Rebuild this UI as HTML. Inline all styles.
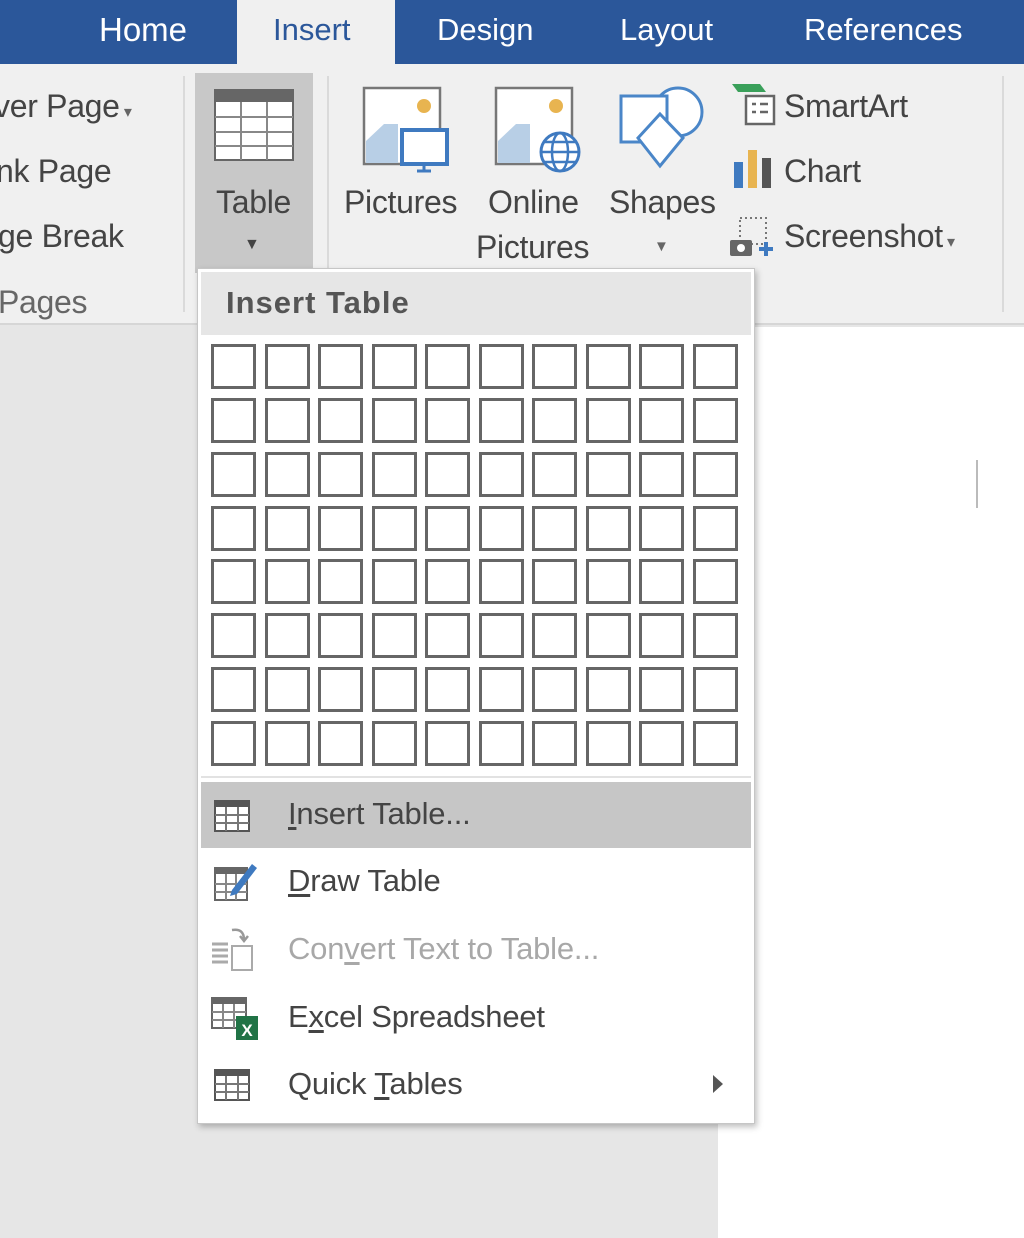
<!DOCTYPE html>
<html><head><meta charset="utf-8"><style>
*{margin:0;padding:0;box-sizing:border-box}
body{width:1024px;height:1238px;overflow:hidden;position:relative;background:#e6e6e6;font-family:"Liberation Sans","DejaVu Sans",sans-serif;color:#444}
.a{position:absolute;white-space:nowrap}
.tab{color:#fff;font-size:31px;top:12px}
.rt{font-size:32px;color:#444;letter-spacing:-0.3px}
.grid{position:absolute;left:211px;top:344px;display:grid;grid-template-columns:repeat(10,45px);grid-auto-rows:45px;column-gap:8.55px;row-gap:8.85px}
.grid div{border:3px solid #666;background:#fff}
.mi{position:absolute;left:288px;font-size:31px;color:#444;letter-spacing:-0.2px}
u{text-decoration:underline;text-underline-offset:3px}
</style></head><body>
<div class="a" style="left:0;top:0;width:1024px;height:64px;background:#2b579a"></div>
<div class="a" style="left:237px;top:0;width:158px;height:66px;background:#f0f0f0"></div>
<div class="a tab" style="left:99px;font-size:33px;top:11px">Home</div>
<div class="a tab" style="left:273px;color:#2b579a">Insert</div>
<div class="a tab" style="left:437px">Design</div>
<div class="a tab" style="left:620px">Layout</div>
<div class="a tab" style="left:804px">References</div>
<div class="a" style="left:0;top:64px;width:1024px;height:261px;background:#f0f0f0;border-bottom:2px solid #d6d6d6"></div>
<div class="a" style="left:718px;top:327px;width:306px;height:911px;background:#fff"></div>
<div class="a" style="left:976px;top:460px;width:2px;height:48px;background:#bbb"></div>
<div class="a" style="left:183px;top:76px;width:2px;height:236px;background:#dadada"></div>
<div class="a" style="left:327px;top:76px;width:2px;height:236px;background:#dadada"></div>
<div class="a" style="left:1002px;top:76px;width:2px;height:236px;background:#dadada"></div>
<div class="a rt" style="left:-6px;top:88px">ver Page<span style="font-size:16px;color:#666"> ▾</span></div>
<div class="a rt" style="left:-4px;top:153px">nk Page</div>
<div class="a rt" style="left:-2px;top:218px">ge Break</div>
<div class="a rt" style="left:-2px;top:284px;color:#666">Pages</div>
<div class="a" style="left:195px;top:73px;width:118px;height:200px;background:#c8c8c8"></div>
<svg class="a" style="left:214px;top:89px" width="80" height="72" viewBox="0 0 80 72">
<rect x="1" y="1" width="78" height="70" fill="#fff" stroke="#666" stroke-width="2"/>
<rect x="1" y="1" width="78" height="12" fill="#666"/>
<path d="M27 13V71M53 13V71M1 28H79M1 43H79M1 57H79" stroke="#888" stroke-width="2"/>
</svg>
<div class="a rt" style="left:216px;top:184px">Table</div>
<div class="a" style="left:244px;top:236px;font-size:16px;color:#444">▼</div>
<svg class="a" style="left:362px;top:86px" width="90" height="88" viewBox="0 0 90 88">
<rect x="2" y="2" width="76" height="76" fill="#fff" stroke="#777" stroke-width="2.5"/>
<circle cx="62" cy="20" r="7" fill="#e8b450"/>
<path d="M4 77V55L22 38H36V77Z" fill="#b8cfe6"/>
<rect x="40" y="44" width="45" height="34" fill="#fff" stroke="#3f7ac0" stroke-width="4"/>
<path d="M62 78V84M55 85H69" stroke="#3f7ac0" stroke-width="3"/>
</svg>
<div class="a rt" style="left:344px;top:184px">Pictures</div>
<svg class="a" style="left:494px;top:86px" width="90" height="88" viewBox="0 0 90 88">
<rect x="2" y="2" width="76" height="76" fill="#fff" stroke="#777" stroke-width="2.5"/>
<circle cx="62" cy="20" r="7" fill="#e8b450"/>
<path d="M4 77V55L22 38H36V77Z" fill="#b8cfe6"/>
<circle cx="66" cy="66" r="19" fill="#fff" stroke="#3f7ac0" stroke-width="3"/>
<ellipse cx="66" cy="66" rx="8" ry="19" fill="none" stroke="#3f7ac0" stroke-width="2.5"/>
<path d="M47 66H85M50 56H82M50 76H82" stroke="#3f7ac0" stroke-width="2.5"/>
</svg>
<div class="a rt" style="left:488px;top:184px">Online</div>
<div class="a rt" style="left:476px;top:229px">Pictures</div>
<svg class="a" style="left:616px;top:82px" width="92" height="90" viewBox="0 0 92 90">
<circle cx="62" cy="30" r="24" fill="#fff" stroke="#4a86c8" stroke-width="3"/>
<rect x="5" y="14" width="46" height="46" fill="#fff" stroke="#4a86c8" stroke-width="3"/>
<path d="M44 32L67 56L44 84L22 56Z" fill="#fff" stroke="#4a86c8" stroke-width="3"/>
</svg>
<div class="a rt" style="left:609px;top:184px">Shapes</div>
<div class="a" style="left:654px;top:238px;font-size:15px;color:#666">▼</div>
<svg class="a" style="left:730px;top:82px" width="50" height="44" viewBox="0 0 50 44">
<path d="M2 2H30L36 10H8Z" fill="#3aa05a"/>
<rect x="16" y="14" width="28" height="28" fill="#fff" stroke="#666" stroke-width="2.5"/>
<path d="M22 22H26M30 22H38M22 30H26M30 30H38" stroke="#666" stroke-width="2.5"/>
</svg>
<div class="a rt" style="left:784px;top:88px">SmartArt</div>
<svg class="a" style="left:732px;top:146px" width="42" height="44" viewBox="0 0 42 44">
<rect x="2" y="16" width="9" height="26" fill="#3f7ac0"/>
<rect x="16" y="4" width="9" height="38" fill="#e8b450"/>
<rect x="30" y="12" width="9" height="30" fill="#555"/>
</svg>
<div class="a rt" style="left:784px;top:153px">Chart</div>
<svg class="a" style="left:728px;top:214px" width="50" height="44" viewBox="0 0 50 44">
<rect x="12" y="4" width="26" height="26" fill="none" stroke="#777" stroke-width="2" stroke-dasharray="2 3"/>
<rect x="2" y="26" width="22" height="16" rx="2" fill="#666"/>
<circle cx="13" cy="34" r="4" fill="#fff"/>
<path d="M38 28V42M31 35H45" stroke="#3f7ac0" stroke-width="4"/>
</svg>
<div class="a rt" style="left:784px;top:218px">Screenshot<span style="font-size:16px;color:#666"> ▾</span></div>
<div class="a" style="left:197px;top:268px;width:558px;height:856px;background:#fff;border:1px solid #c6c6c6;box-shadow:2px 3px 6px rgba(0,0,0,0.25)"></div>
<div class="a" style="left:201px;top:272px;width:550px;height:63px;background:#e6e6e6"></div>
<div class="a" style="left:226px;top:285px;font-size:31px;font-weight:bold;color:#555;letter-spacing:1px">Insert Table</div>
<div class="grid">
<div></div><div></div><div></div><div></div><div></div><div></div><div></div><div></div><div></div><div></div>
<div></div><div></div><div></div><div></div><div></div><div></div><div></div><div></div><div></div><div></div>
<div></div><div></div><div></div><div></div><div></div><div></div><div></div><div></div><div></div><div></div>
<div></div><div></div><div></div><div></div><div></div><div></div><div></div><div></div><div></div><div></div>
<div></div><div></div><div></div><div></div><div></div><div></div><div></div><div></div><div></div><div></div>
<div></div><div></div><div></div><div></div><div></div><div></div><div></div><div></div><div></div><div></div>
<div></div><div></div><div></div><div></div><div></div><div></div><div></div><div></div><div></div><div></div>
<div></div><div></div><div></div><div></div><div></div><div></div><div></div><div></div><div></div><div></div>
</div>
<div class="a" style="left:201px;top:776px;width:550px;height:2px;background:#e2e2e2"></div>
<div class="a" style="left:201px;top:782px;width:550px;height:66px;background:#c6c6c6"></div>
<svg class="a" style="left:214px;top:800px" width="36" height="32" viewBox="0 0 36 32">
<rect x="1" y="1" width="34" height="30" fill="#fff" stroke="#555" stroke-width="2"/><rect x="1" y="1" width="34" height="6" fill="#555"/>
<path d="M12 7V31M24 7V31M1 15H35M1 23H35" stroke="#777" stroke-width="2"/></svg>
<div class="mi" style="top:796px"><u>I</u>nsert Table...</div>
<svg class="a" style="left:212px;top:858px" width="46" height="46" viewBox="0 0 46 46">
<rect x="3" y="10" width="32" height="32" fill="#fff" stroke="#666" stroke-width="2"/><rect x="3" y="10" width="32" height="6" fill="#666"/>
<path d="M14 16V42M24 16V42M3 26H35M3 34H35" stroke="#888" stroke-width="2"/>
<path d="M20 32L40 6L45 10L25 36L18 38Z" fill="#3f7ac0"/></svg>
<div class="mi" style="top:863px"><u>D</u>raw Table</div>
<svg class="a" style="left:210px;top:926px" width="48" height="46" viewBox="0 0 48 46">
<path d="M2 18H18M2 24H18M2 30H18M2 36H18" stroke="#aaa" stroke-width="3"/>
<rect x="22" y="20" width="20" height="24" fill="#fff" stroke="#aaa" stroke-width="2"/>
<path d="M22 4Q34 2 34 14M30 10L34 15L38 10" fill="none" stroke="#999" stroke-width="2.5"/></svg>
<div class="mi" style="top:931px;color:#a8a8a8">Con<u>v</u>ert Text to Table...</div>
<svg class="a" style="left:210px;top:996px" width="50" height="46" viewBox="0 0 50 46">
<rect x="2" y="2" width="34" height="30" fill="#fff" stroke="#666" stroke-width="2"/><rect x="2" y="2" width="34" height="6" fill="#666"/>
<path d="M13 8V32M24 8V32M2 16H36M2 24H36" stroke="#888" stroke-width="2"/>
<rect x="26" y="20" width="22" height="24" fill="#217346"/>
<text x="37" y="40" font-size="17" font-weight="bold" fill="#fff" text-anchor="middle" font-family="Liberation Sans">X</text></svg>
<div class="mi" style="top:999px">E<u>x</u>cel Spreadsheet</div>
<svg class="a" style="left:214px;top:1069px" width="36" height="32" viewBox="0 0 36 32">
<rect x="1" y="1" width="34" height="30" fill="#fff" stroke="#555" stroke-width="2"/><rect x="1" y="1" width="34" height="6" fill="#555"/>
<path d="M12 7V31M24 7V31M1 15H35M1 23H35" stroke="#777" stroke-width="2"/></svg>
<div class="mi" style="top:1066px">Quick <u>T</u>ables</div>
<div class="a" style="left:713px;top:1075px;width:0;height:0;border-left:10px solid #555;border-top:9px solid transparent;border-bottom:9px solid transparent"></div>
</body></html>
